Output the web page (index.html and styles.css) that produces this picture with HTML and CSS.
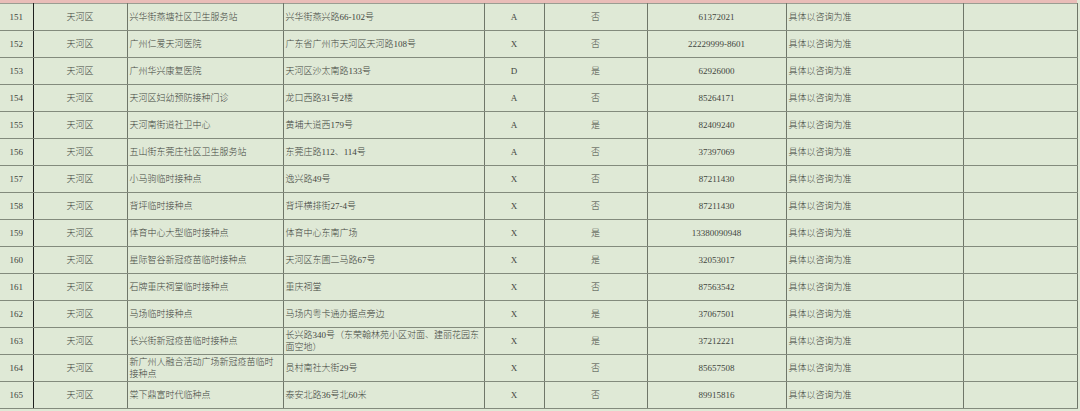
FILE: index.html
```html
<!DOCTYPE html>
<html lang="zh-CN">
<head>
<meta charset="utf-8">
<title>接种点</title>
<link rel="stylesheet" href="styles.css">
</head>
<body>
<div class="sheet">
<table class="grid">
<colgroup>
<col class="c-no"><col class="c-dist"><col class="c-name"><col class="c-addr"><col class="c-type"><col class="c-yn"><col class="c-tel"><col class="c-note"><col class="c-end">
</colgroup>
<tbody>
<tr><td class="no">151</td><td class="ctr">天河区</td><td>兴华街燕塘社区卫生服务站</td><td>兴华街燕兴路66-102号</td><td class="ctr">A</td><td class="ctr">否</td><td class="ctr">61372021</td><td>具体以咨询为准</td><td></td></tr>
<tr><td class="no">152</td><td class="ctr">天河区</td><td>广州仁爱天河医院</td><td>广东省广州市天河区天河路108号</td><td class="ctr">X</td><td class="ctr">否</td><td class="ctr">22229999-8601</td><td>具体以咨询为准</td><td></td></tr>
<tr><td class="no">153</td><td class="ctr">天河区</td><td>广州华兴康复医院</td><td>天河区沙太南路133号</td><td class="ctr">D</td><td class="ctr">是</td><td class="ctr">62926000</td><td>具体以咨询为准</td><td></td></tr>
<tr><td class="no">154</td><td class="ctr">天河区</td><td>天河区妇幼预防接种门诊</td><td>龙口西路31号2楼</td><td class="ctr">A</td><td class="ctr">否</td><td class="ctr">85264171</td><td>具体以咨询为准</td><td></td></tr>
<tr><td class="no">155</td><td class="ctr">天河区</td><td>天河南街道社卫中心</td><td>黄埔大道西179号</td><td class="ctr">A</td><td class="ctr">是</td><td class="ctr">82409240</td><td>具体以咨询为准</td><td></td></tr>
<tr><td class="no">156</td><td class="ctr">天河区</td><td>五山街东莞庄社区卫生服务站</td><td>东莞庄路112、114号</td><td class="ctr">A</td><td class="ctr">否</td><td class="ctr">37397069</td><td>具体以咨询为准</td><td></td></tr>
<tr><td class="no">157</td><td class="ctr">天河区</td><td>小马驹临时接种点</td><td>逸兴路49号</td><td class="ctr">X</td><td class="ctr">否</td><td class="ctr">87211430</td><td>具体以咨询为准</td><td></td></tr>
<tr><td class="no">158</td><td class="ctr">天河区</td><td>背坪临时接种点</td><td>背坪横排街27-4号</td><td class="ctr">X</td><td class="ctr">否</td><td class="ctr">87211430</td><td>具体以咨询为准</td><td></td></tr>
<tr><td class="no">159</td><td class="ctr">天河区</td><td>体育中心大型临时接种点</td><td>体育中心东南广场</td><td class="ctr">X</td><td class="ctr">是</td><td class="ctr">13380090948</td><td>具体以咨询为准</td><td></td></tr>
<tr><td class="no">160</td><td class="ctr">天河区</td><td>星际智谷新冠疫苗临时接种点</td><td>天河区东圃二马路67号</td><td class="ctr">X</td><td class="ctr">是</td><td class="ctr">32053017</td><td>具体以咨询为准</td><td></td></tr>
<tr><td class="no">161</td><td class="ctr">天河区</td><td>石牌重庆祠堂临时接种点</td><td>重庆祠堂</td><td class="ctr">X</td><td class="ctr">否</td><td class="ctr">87563542</td><td>具体以咨询为准</td><td></td></tr>
<tr><td class="no">162</td><td class="ctr">天河区</td><td>马场临时接种点</td><td>马场内粤卡通办据点旁边</td><td class="ctr">X</td><td class="ctr">是</td><td class="ctr">37067501</td><td>具体以咨询为准</td><td></td></tr>
<tr><td class="no">163</td><td class="ctr">天河区</td><td>长兴街新冠疫苗临时接种点</td><td>长兴路340号（东荣翰林苑小区对面、建丽花园东面空地）</td><td class="ctr">X</td><td class="ctr">是</td><td class="ctr">37212221</td><td>具体以咨询为准</td><td></td></tr>
<tr><td class="no">164</td><td class="ctr">天河区</td><td>新广州人融合活动广场新冠疫苗临时接种点</td><td>员村南社大街29号</td><td class="ctr">X</td><td class="ctr">否</td><td class="ctr">85657508</td><td>具体以咨询为准</td><td></td></tr>
<tr><td class="no">165</td><td class="ctr">天河区</td><td>棠下鼎富时代临种点</td><td>泰安北路36号北60米</td><td class="ctr">X</td><td class="ctr">否</td><td class="ctr">89915816</td><td>具体以咨询为准</td><td></td></tr>
</tbody>
</table>
</div>
</body>
</html>
```

FILE: styles.css
```css
html, body {
  margin: 0;
  padding: 0;
  background: #dfe9d6;
}
body {
  width: 1080px;
  height: 411px;
  overflow: hidden;
}
.sheet {
  border-top: 3px solid #e9bdb8;
  width: 1077px;
}
.grid {
  border-collapse: collapse;
  table-layout: fixed;
  width: 1077px;
  font-family: "Liberation Serif", "Noto Sans CJK SC", serif;
  font-size: 9px;
  font-weight: 300;
  color: #42463e;
}
.c-no { width: 33px; }
.c-dist { width: 94px; }
.c-name { width: 156px; }
.c-addr { width: 201px; }
.c-type { width: 60px; }
.c-yn { width: 103px; }
.c-tel { width: 139px; }
.c-note { width: 177px; }
.c-end { width: 114px; }
.grid td {
  height: 26px;
  padding: 0 2px 0 2px;
  border-top: 1px solid #838b7d;
  border-bottom: 1px solid #838b7d;
  border-left: 1px solid #6f7669;
  border-right: 1px solid #6f7669;
  line-height: 12px;
  vertical-align: middle;
  text-align: left;
  overflow: hidden;
}
.grid tr:first-child td {
  border-top-color: #9a9d92;
}
.grid td.no {
  border-left: none;
  border-right: 1px solid #1f211e;
  text-align: center;
  padding: 0;
}
.grid td.ctr {
  text-align: center;
  padding: 0;
}
```
